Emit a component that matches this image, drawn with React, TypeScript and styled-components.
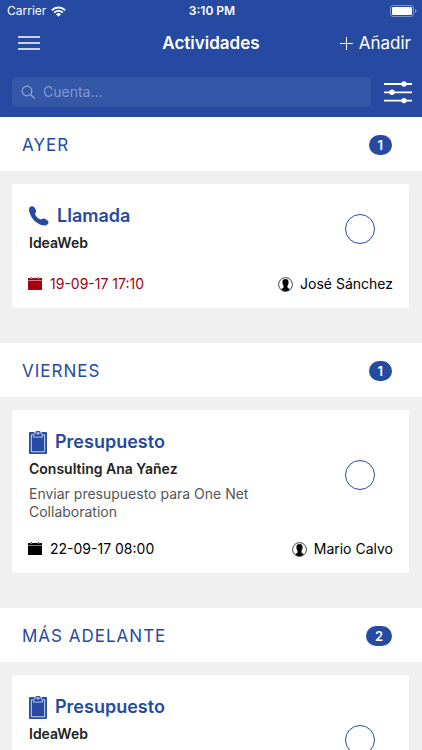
import React from "react";
import styled, { createGlobalStyle } from "styled-components";

const BLUE = "#264aa2";

const GlobalStyle = createGlobalStyle`
  *, *::before, *::after { box-sizing: border-box; }
  html { scrollbar-width: none; }
  body {
    margin: 0;
    background: #f0f0f0;
    font-family: Inter, "Liberation Sans", sans-serif;
    color: #000;
  }
  button, input { font-family: inherit; }
  h1, h2, h3, p { margin: 0; }
  svg { display: block; flex: none; }
`;

const Screen = styled.div`
  display: flex;
  flex-direction: column;
  min-height: 100vh;
`;

const Header = styled.header`
  position: sticky;
  top: 0;
  z-index: 1;
  background: ${BLUE};
  color: #fff;
`;

const StatusBar = styled.div`
  display: grid;
  grid-template-columns: 1fr auto 1fr;
  align-items: center;
  height: 22px;
  padding: 0 5px 0 7px;
  font-size: 12px;
  line-height: 16px;
`;

const Carrier = styled.div`
  display: flex;
  align-items: center;
  gap: 5px;
`;

const Clock = styled.time`
  font-weight: 600;
`;

const BatterySlot = styled.div`
  display: flex;
  justify-content: flex-end;
`;

const NavBar = styled.div`
  display: grid;
  grid-template-columns: 1fr auto 1fr;
  align-items: center;
  height: 42px;
  padding: 0 11px;
`;

const IconButton = styled.button`
  display: flex;
  justify-self: start;
  padding: 0;
  border: 0;
  background: none;
  color: #fff;
  cursor: pointer;
`;

const MenuButton = styled(IconButton)`
  padding-left: 7px;
`;

const PageTitle = styled.h1`
  font-size: 17px;
  line-height: 24px;
  font-weight: 600;
`;

const AddButton = styled.button`
  display: flex;
  align-items: center;
  justify-self: end;
  gap: 6px;
  padding: 0;
  border: 0;
  background: none;
  color: #fff;
  font-size: 17px;
  line-height: 24px;
  cursor: pointer;
`;

const SearchRow = styled.div`
  display: flex;
  align-items: center;
  gap: 13px;
  padding: 13px 10px 10px 12px;
`;

const SearchBox = styled.label`
  flex: 1;
  display: flex;
  align-items: center;
  gap: 7px;
  height: 30px;
  padding: 0 9px;
  border-radius: 5px;
  background: #3457a8;
  color: #8fa4d6;
`;

const SearchInput = styled.input`
  flex: 1;
  min-width: 0;
  padding: 0;
  border: 0;
  outline: 0;
  background: none;
  color: #fff;
  font-size: 14px;
  line-height: 20px;
  &::placeholder { color: #8298cf; opacity: 1; }
`;

const List = styled.main`
  flex: 1;
`;

const Group = styled.section`
  padding-bottom: 35px;
`;

const GroupHeader = styled.div`
  display: flex;
  align-items: center;
  justify-content: space-between;
  height: 54px;
  padding: 2px 30px 0 22px;
  background: #fff;
  color: ${BLUE};
`;

const GroupTitle = styled.h2`
  font-size: 17px;
  line-height: 24px;
  font-weight: 400;
  letter-spacing: 1px;
`;

const Badge = styled.span`
  padding: 0 9px;
  border-radius: 10px;
  background: ${BLUE};
  color: #fff;
  font-size: 13px;
  line-height: 20px;
  font-weight: 600;
`;

const Card = styled.article`
  margin: 13px 13px 0 12px;
  border-radius: 2px;
  background: #fff;
`;

const CardBody = styled.div`
  display: flex;
  align-items: center;
  min-height: 90px;
  padding-right: 34px;
`;

const Details = styled.div`
  flex: 1;
  align-self: flex-start;
  padding: 20px 64px 18px 17px;
`;

const CardTitle = styled.h3`
  display: flex;
  align-items: center;
  gap: 8px;
  height: 24px;
  color: ${BLUE};
  font-size: 18px;
  line-height: 24px;
  font-weight: 600;
`;

const Account = styled.p`
  margin-top: 5px;
  color: #222;
  font-size: 14px;
  line-height: 20px;
  font-weight: 600;
`;

const Description = styled.p`
  margin-top: 6px;
  color: #555;
  font-size: 14px;
  line-height: 18px;
`;

const DoneCheck = styled.input`
  appearance: none;
  flex: none;
  width: 30px;
  height: 30px;
  margin: 0;
  border: 1px solid ${BLUE};
  border-radius: 50%;
  cursor: pointer;
  &:checked { background: ${BLUE}; }
`;

const CardFooter = styled.div`
  display: flex;
  justify-content: space-between;
  padding: 0 16px 14px;
  font-size: 14px;
  line-height: 20px;
`;

const Due = styled.span<{ $late?: boolean }>`
  display: flex;
  align-items: center;
  gap: 8px;
  color: ${(p) => (p.$late ? "#a50011" : "#000")};
`;

const Owner = styled.span`
  display: flex;
  align-items: center;
  gap: 7px;
`;

const WifiIcon = () => (
  <svg width="15" height="11" viewBox="0 0 15 11" fill="none" stroke="#fff" strokeWidth="1.9">
    <path d="M0.9 4.2a9.6 9.6 0 0 1 13.2 0" />
    <path d="M3.2 6.6a6.2 6.2 0 0 1 8.6 0" />
    <path d="M7.5 10.8 5 8.3a3.6 3.6 0 0 1 5 0Z" fill="#fff" stroke="none" />
  </svg>
);

const BatteryIcon = () => (
  <svg width="27" height="12" viewBox="0 0 27 12">
    <rect x="0.5" y="0.5" width="23" height="11" rx="2.5" fill="none" stroke="#7d92c8" />
    <rect x="2" y="2" width="20" height="8" rx="1.2" fill="#fff" />
    <path d="M25 4v4c1-.3 1.500-1.100 1.500-2S26 4.300 25 4Z" fill="#7d92c8" />
  </svg>
);

const MenuIcon = () => (
  <svg width="22" height="14" viewBox="0 0 22 14" stroke="#fff" strokeWidth="1.600">
    <path d="M0 1h22M0 7h22M0 13h22" />
  </svg>
);

const PlusIcon = () => (
  <svg width="13" height="13" viewBox="0 0 13 13" stroke="#fff" strokeWidth="1">
    <path d="M6.500 0v13M0 6.500h13" />
  </svg>
);

const SearchIcon = () => (
  <svg width="15" height="15" viewBox="0 0 15 15" fill="none" stroke="currentColor" strokeWidth="1.200">
    <circle cx="6" cy="6" r="4.800" />
    <path d="m9.500 9.500 4.500 4.300" />
  </svg>
);

const FilterIcon = () => (
  <svg width="28" height="24" viewBox="0 0 28 24" fill="#fff" stroke="#fff" strokeWidth="1.800">
    <path d="M0 4h28M0 12.300h28M0 20.600h28" />
    <g stroke="none">
      <circle cx="20" cy="4" r="2.700" />
      <circle cx="8" cy="12.300" r="2.700" />
      <circle cx="20" cy="20.600" r="2.700" />
    </g>
  </svg>
);

const PhoneIcon = () => (
  <svg width="20" height="20" viewBox="0 0 20 20" fill="currentColor">
    <path d="M.4 1.800C1.300.4 3.300-.1 4.500.7 5.800 1.500 7 3.500 7.100 5c.1 1.400-1.300 2.100-1 3.200.5 1.900 3 4.300 5 5.100 1.200.4 2-.9 3.400-.8 1.600.2 4 1.600 4.800 3.100.8 1.600-1.100 3.500-3.400 3.800-3.300.4-8.500-2.200-11.600-5.800C1.400 10.200-.9 4.200.4 1.800Z" />
  </svg>
);

const ClipboardIcon = () => (
  <svg width="18" height="23" viewBox="0 0 18 23">
    <path d="M1 1h4.800L7.200.6a2 2 0 0 1 3.600 0l1.400.4H17a1 1 0 0 1 1 1v20a1 1 0 0 1-1 1H1a1 1 0 0 1-1-1V2a1 1 0 0 1 1-1Z" fill="currentColor" />
    <path d="M4.400 3.800H2.300v17h13.400v-17h-2.100" fill="none" stroke="#dce4f6" strokeWidth="0.900" />
    <path d="M5.600 1.300 4.400 6.100h9.200l-1.200-4.800-1.900.9c-.2 1.300-2.800 1.300-3 0Z" fill="currentColor" stroke="#dce4f6" strokeWidth="0.800" />
    <circle cx="9" cy="1.700" r="0.800" fill="#fff" />
  </svg>
);

const CalendarIcon = () => (
  <svg width="14" height="14" viewBox="0 0 14 14" fill="currentColor">
    <path d="M0 1h2.800v.8h1.400V1h5.600v.8h1.400V1H14v2.200H0ZM0 3.700h14V13H0ZM3.100 0h.8v1.300h-.8ZM10.100 0h.8v1.300h-.8Z" />
  </svg>
);

const UserIcon = () => (
  <svg width="15" height="15" viewBox="0 0 15 15">
    <circle cx="7.500" cy="7.500" r="6.900" fill="#fff" stroke="#111" strokeWidth="0.800" />
    <path d="M7.500 2.100c2 0 3.100 1.200 3.100 3.100 0 1.500-.5 2.700-1.100 3.500v1.700c.2.700 1.400 1 2.300 1.600-1.200 1.500-2.500 2.200-4.300 2.200S4.400 13.500 3.200 12c.9-.6 2.100-.9 2.300-1.600V8.700C4.900 7.900 4.400 6.700 4.400 5.200c0-1.900 1.100-3.100 3.100-3.100Z" />
  </svg>
);

type Activity = {
  kind: "call" | "quote";
  title: string;
  account: string;
  description?: string;
  due: string;
  late?: boolean;
  owner: string;
};

const groups: { title: string; count: number; items: Activity[] }[] = [
  {
    title: "AYER",
    count: 1,
    items: [
      { kind: "call", title: "Llamada", account: "IdeaWeb", due: "19-09-17 17:10", late: true, owner: "José Sánchez" },
    ],
  },
  {
    title: "VIERNES",
    count: 1,
    items: [
      {
        kind: "quote",
        title: "Presupuesto",
        account: "Consulting Ana Yañez",
        description: "Enviar presupuesto para One Net Collaboration",
        due: "22-09-17 08:00",
        owner: "Mario Calvo",
      },
    ],
  },
  {
    title: "MÁS ADELANTE",
    count: 2,
    items: [
      {
        kind: "quote",
        title: "Presupuesto",
        account: "IdeaWeb",
        description: "Enviar presupuesto para One Net Collaboration",
        due: "22-09-17 08:00",
        owner: "Mario Calvo",
      },
    ],
  },
];

const ActivityCard = ({ item }: { item: Activity }) => (
  <Card>
    <CardBody>
      <Details>
        <CardTitle>
          {item.kind === "call" ? <PhoneIcon /> : <ClipboardIcon />}
          {item.title}
        </CardTitle>
        <Account>{item.account}</Account>
        {item.description && <Description>{item.description}</Description>}
      </Details>
      <DoneCheck type="checkbox" aria-label={`${item.title}, ${item.account}`} />
    </CardBody>
    <CardFooter>
      <Due $late={item.late}>
        <CalendarIcon />
        {item.due}
      </Due>
      <Owner>
        <UserIcon />
        {item.owner}
      </Owner>
    </CardFooter>
  </Card>
);

export default function App() {
  return (
    <Screen>
      <GlobalStyle />
      <Header>
        <StatusBar>
          <Carrier>
            Carrier
            <WifiIcon />
          </Carrier>
          <Clock>3:10 PM</Clock>
          <BatterySlot>
            <BatteryIcon />
          </BatterySlot>
        </StatusBar>
        <NavBar>
          <MenuButton type="button" aria-label="Menú">
            <MenuIcon />
          </MenuButton>
          <PageTitle>Actividades</PageTitle>
          <AddButton type="button">
            <PlusIcon />
            Añadir
          </AddButton>
        </NavBar>
        <SearchRow>
          <SearchBox>
            <SearchIcon />
            <SearchInput type="text" placeholder="Cuenta..." aria-label="Cuenta" />
          </SearchBox>
          <IconButton type="button" aria-label="Filtros">
            <FilterIcon />
          </IconButton>
        </SearchRow>
      </Header>
      <List>
        {groups.map((group) => (
          <Group key={group.title}>
            <GroupHeader>
              <GroupTitle>{group.title}</GroupTitle>
              <Badge>{group.count}</Badge>
            </GroupHeader>
            {group.items.map((item) => (
              <ActivityCard key={item.account} item={item} />
            ))}
          </Group>
        ))}
      </List>
    </Screen>
  );
}
